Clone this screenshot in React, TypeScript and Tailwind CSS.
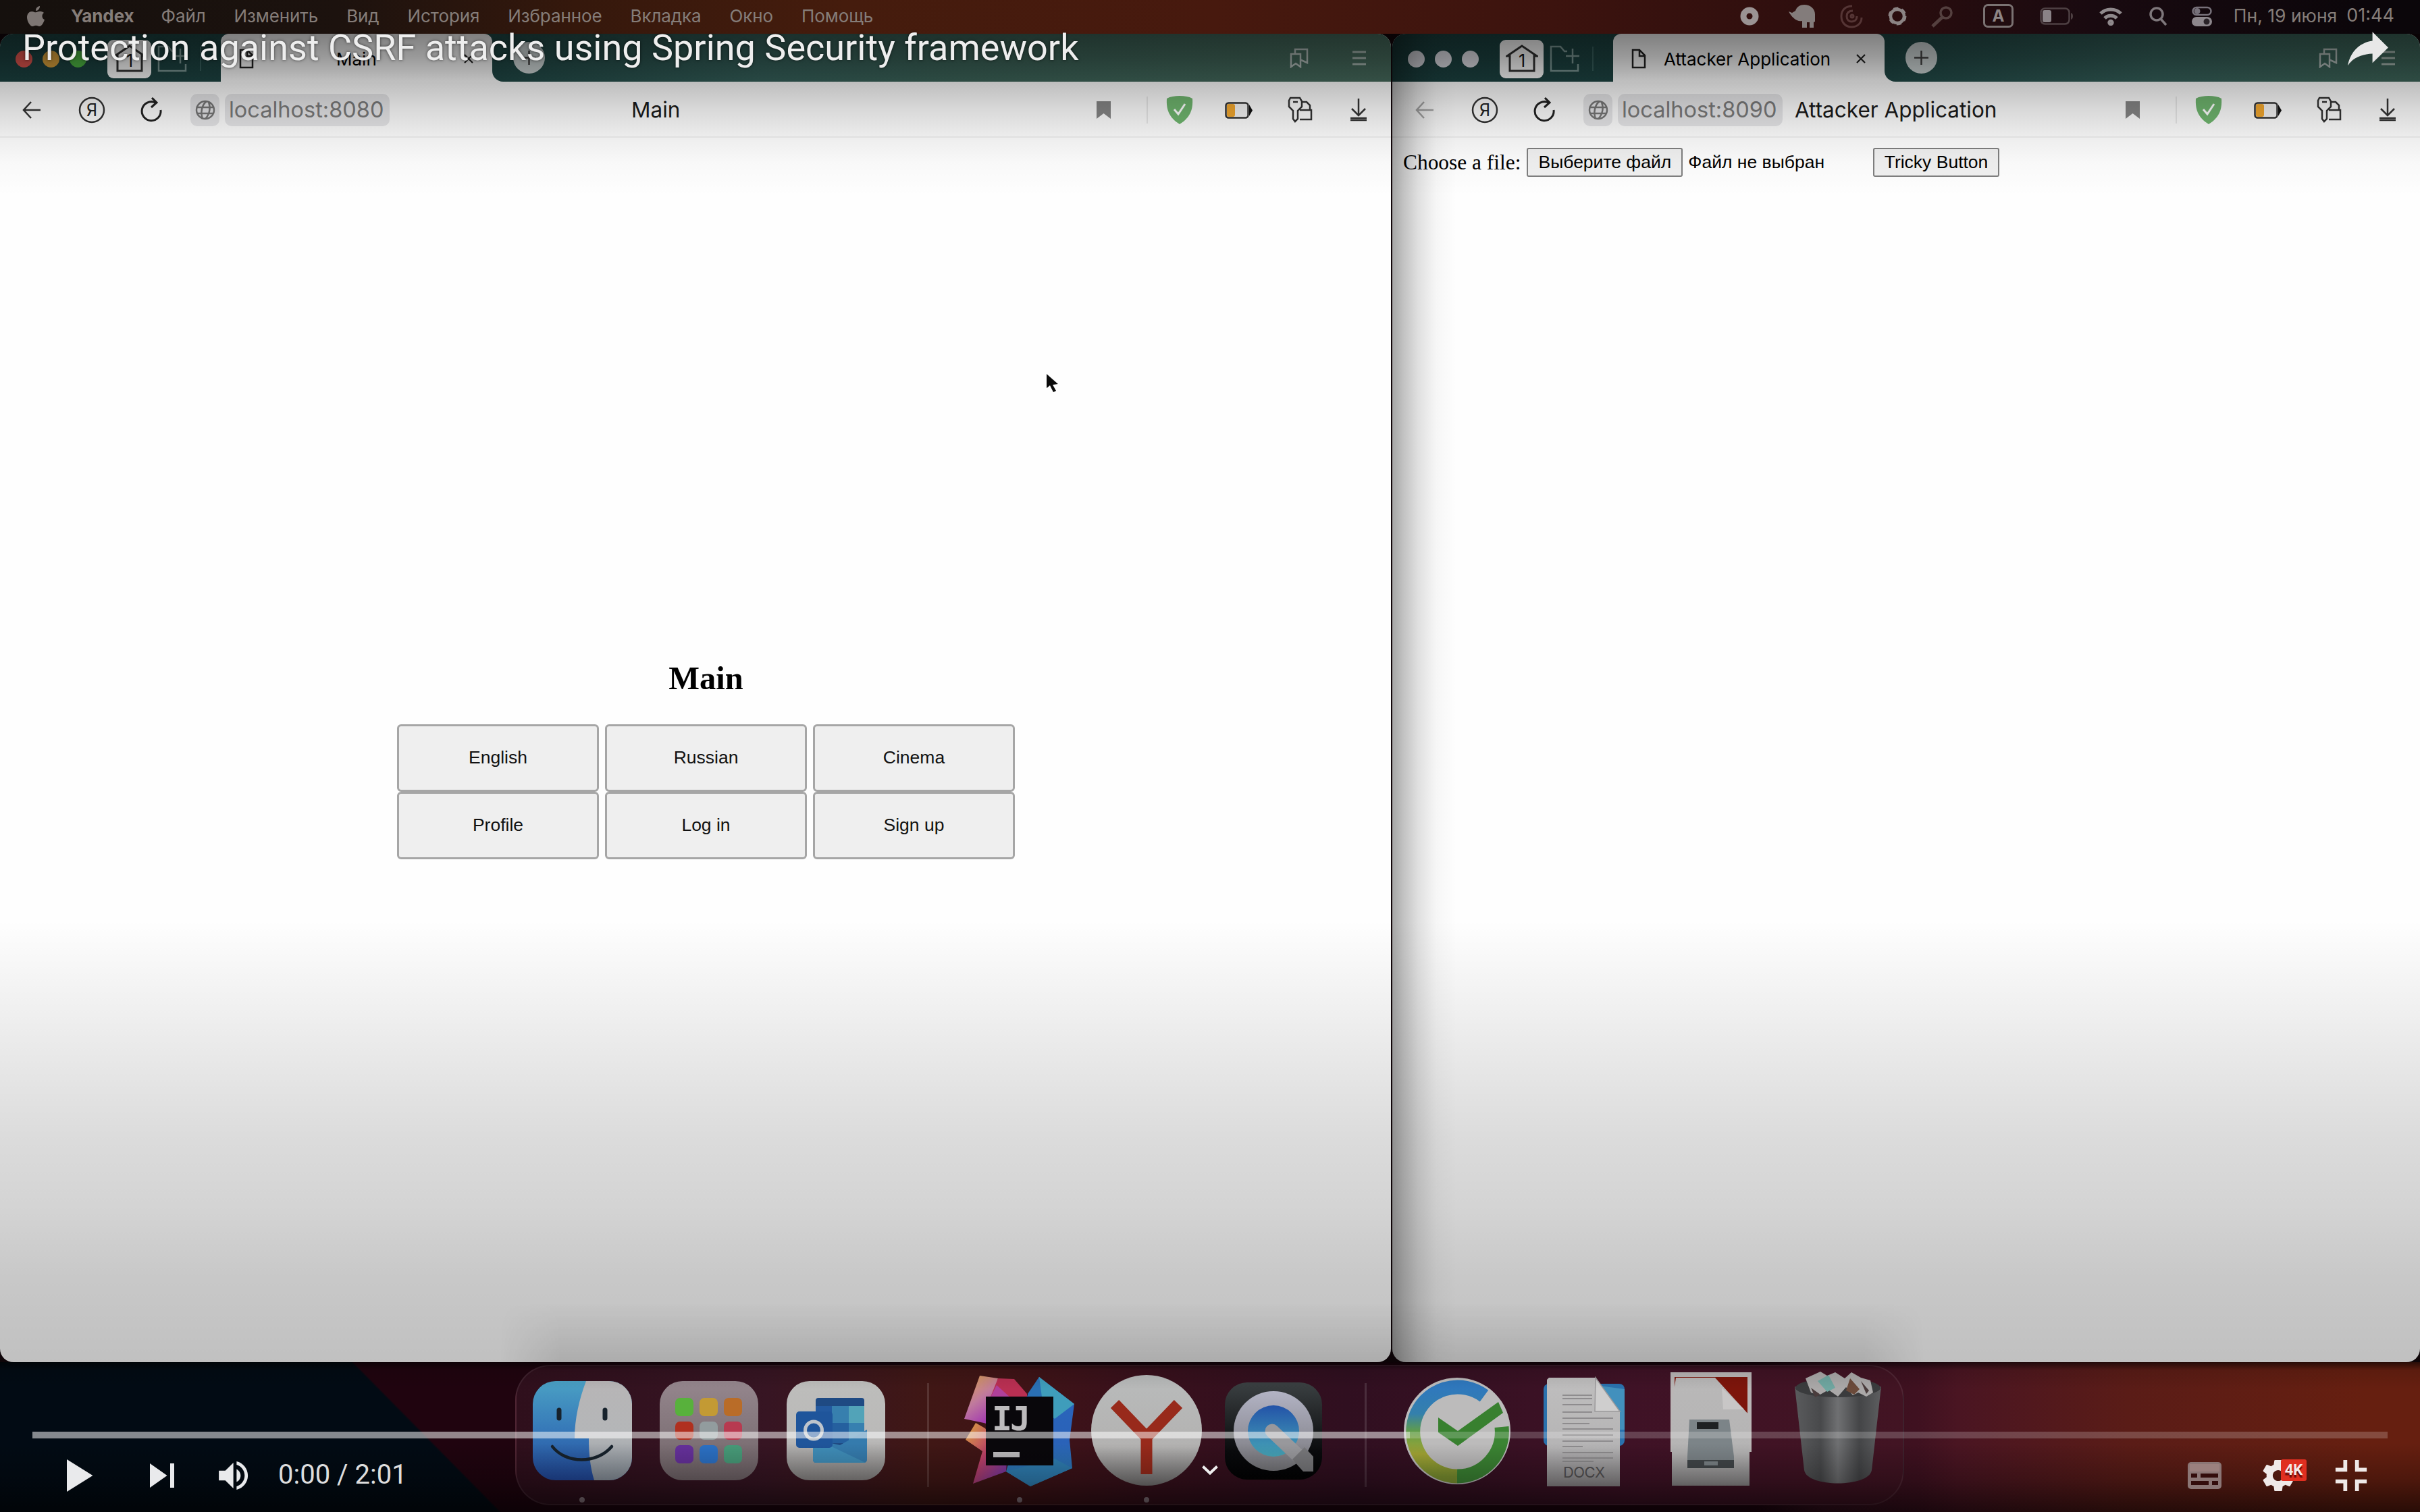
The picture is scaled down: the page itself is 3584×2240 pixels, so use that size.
import React from 'react';

const menuItems = ['Файл', 'Изменить', 'Вид', 'История', 'Избранное', 'Вкладка', 'Окно', 'Помощь'];

function MenuBar() {
  return (
    <header className="flex h-[50px] shrink-0 items-center bg-[linear-gradient(90deg,#15100d_0,#1c120e_500px,#35180c_850px,#451c0d_1250px,#47190e_1800px,#3c130e_2300px,#2a0d0e_2800px,#190a10_3100px,#0b060a_3500px)] pb-[3px] text-[26px] tracking-[-0.1px] text-[#857d79]">
      <svg className="ml-[38px] shrink-0" width="30" height="32" viewBox="0 0 30 32" fill="#7d7673">
        <path d="M21 1c.3 3.600-2.600 7-6 7-.4-3.400 2.600-6.700 6-7zM27 11c-3.600 2.300-3.400 8.300 1 10.200C26.400 26 23.500 31 20.200 31c-1.900 0-2.900-1.200-5-1.200S12 31 10.200 31C6.500 31 2 23.700 2 17.500 2 12 5.500 8.900 9.300 8.900c2.300 0 4 1.400 5.700 1.400 1.600 0 3.600-1.600 6.400-1.500 2.300.1 4.300 1 5.600 2.200z" />
      </svg>
      <span className="mr-[40px] ml-[37px] font-bold">Yandex</span>
      <div className="flex gap-[42px]">
        {menuItems.map((m) => (
          <span key={m}>{m}</span>
        ))}
      </div>
      <div className="mr-[38px] ml-auto flex items-center">
        <svg width="28" height="28" viewBox="0 0 28 28"><circle cx="14" cy="14" r="9" fill="none" stroke="#9a9393" strokeWidth="9" /></svg>
        <svg className="ml-[44px]" width="40" height="36" viewBox="0 0 40 36" fill="#837c7b">
          <path d="M0 11l5 2 5-3c2-6 7-9 13-9 9 0 16 6 16 14v11l-2 1v8h-6v-8h-4v8h-7V25c-8 2-16-6-20-14z" />
        </svg>
        <svg className="ml-[36px]" width="34" height="36" viewBox="0 0 34 36" fill="none" stroke="#553535" strokeWidth="3">
          <path d="M18 3C8 3 2 9 2 18s6 16 15 16 15-6 15-14" /><path d="M19 10c-6 0-9 3-9 8s3 8 7 8 8-2 8-8" /><circle cx="18" cy="18" r="2" />
        </svg>
        <svg className="ml-[37px]" width="28" height="30" viewBox="0 0 28 30" fill="none"><circle cx="14" cy="15" r="10" stroke="#8b8484" strokeWidth="4.500" /><circle cx="14" cy="15" r="11.500" stroke="#8b8484" strokeWidth="4" strokeDasharray="7 5.040" /></svg>
        <svg className="ml-[36px]" width="34" height="34" viewBox="0 0 34 34" fill="none" stroke="#54403f" strokeWidth="3.500">
          <circle cx="22" cy="12" r="8" /><path d="M17 18L2 32" strokeWidth="5" />
        </svg>
        <span className="ml-[43px] flex h-[35px] w-[45px] items-center justify-center rounded-[7px] border-[3px] border-[#7a7272] text-[24px] font-bold text-[#8d8686]">A</span>
        <svg className="ml-[39px]" width="50" height="28" viewBox="0 0 50 28">
          <rect x="1.500" y="2.500" width="42" height="23" rx="6" fill="none" stroke="#4e4043" strokeWidth="2.500" /><rect x="4" y="5" width="13" height="18" rx="3" fill="#8a8286" /><path d="M46 9c4 1 4 9 0 10z" fill="#4e4043" />
        </svg>
        <svg className="ml-[37px]" width="36" height="28" viewBox="0 0 36 28" fill="none" stroke="#8f898c" strokeWidth="5">
          <path d="M3 10c8-8 22-8 30 0" /><path d="M9 17c5-5 13-5 18 0" /><circle cx="18" cy="23.500" r="2.200" />
        </svg>
        <svg className="ml-[38px]" width="28" height="30" viewBox="0 0 28 30" fill="none" stroke="#7e777b" strokeWidth="3.500"><circle cx="12" cy="12" r="9" /><path d="M18 19l8 9" /></svg>
        <svg className="ml-[36px]" width="30" height="30" viewBox="0 0 30 30">
          <rect x="1.500" y="2" width="27" height="11" rx="5.500" fill="none" stroke="#77717a" strokeWidth="2.500" /><circle cx="8" cy="7.500" r="4.500" fill="#77717a" /><rect x="0" y="16" width="30" height="14" rx="7" fill="#8d878c" /><circle cx="22" cy="23" r="4.500" fill="#2a2328" />
        </svg>
        <span className="ml-[32px] text-[26.500px] tracking-normal">Пн, 19 июня</span>
        <span className="ml-[14px] text-[27px] tracking-normal">01:44</span>
      </div>
    </header>
  );
}

function TabStrip({ active, title, titleCls }: { active: boolean; title: string; titleCls: string }) {
  return (
    <div className="flex h-[71px] items-stretch bg-[linear-gradient(90deg,#1b4140_0,#1f4745_700px,#35605a_1100px,#3c6459_1400px,#466a5c_2060px)]">
      <div className="flex w-[327px] items-center pt-[3px]">
        {active ? (
          <div className="ml-[23px] flex gap-[15px]"><i className="size-[25px] rounded-full bg-[#e2564f]" /><i className="size-[25px] rounded-full bg-[#dda33c]" /><i className="size-[25px] rounded-full bg-[#4fb944]" /></div>
        ) : (
          <div className="ml-[23px] flex gap-[15px]"><i className="size-[25px] rounded-full bg-[#e3e3ea]" /><i className="size-[25px] rounded-full bg-[#e3e3ea]" /><i className="size-[25px] rounded-full bg-[#e3e3ea]" /></div>
        )}
        <div className="ml-[31px] flex h-[57px] w-[65px] items-center justify-center rounded-[9px] bg-white">
          <svg width="48" height="42" viewBox="0 0 48 42"><path d="M24 2L2 17h4v22h36V17h4z" fill="none" stroke="#333" strokeWidth="3" /><text x="24" y="33" textAnchor="middle" fontSize="25" fill="#111">1</text></svg>
        </div>
        <svg className="ml-[9px]" width="44" height="40" viewBox="0 0 44 40" fill="none" stroke="#7f9b98" strokeWidth="2.500"><path d="M42 28v10H2V2h14l6 7h4M24 16h20M34 5v22" /></svg>
        <i className="ml-[19px] h-[36px] w-[2px] bg-[#38605e]" />
      </div>
      <div className="flex w-[402px] items-center rounded-t-[12px] bg-white pt-[3px]">
        <svg className="ml-[27px]" width="22" height="30" viewBox="0 0 22 30" fill="none" stroke="#222" strokeWidth="2.500"><path d="M2 2h10l8 8v18H2zM12 2v9h8" /></svg>
        <span className={titleCls}>{title}</span>
        <svg className="mr-[28px] ml-auto" width="14" height="14" viewBox="0 0 14 14" stroke="#222" strokeWidth="2.200"><path d="M1 1l12 12M13 1L1 13" /></svg>
      </div>
      <div className="flex flex-1 items-stretch bg-white">
        <div className="flex flex-1 items-center rounded-bl-[16px] bg-[linear-gradient(90deg,#1f4745_0,#35605a_400px,#3c6459_700px,#466a5c_1330px)]">
          <svg className="ml-[31px]" width="47" height="47" viewBox="0 0 47 47"><circle cx="23.500" cy="23.500" r="23.500" fill="#d3dbdb" /><path d="M23.500 13v21M13 23.500h21" stroke="#444" strokeWidth="2.500" /></svg>
          <svg className="ml-auto" width="28" height="30" viewBox="0 0 28 30" fill="none" stroke="#b5c0bd" strokeWidth="2.500"><path d="M2 9h14v19l-7-5-7 5zM8 8V2h18v20l-9-4" /></svg>
          <svg className="mr-[37px] ml-[65px]" width="20" height="22" viewBox="0 0 20 22" stroke="#a9b8b2" strokeWidth="3"><path d="M0 2h20M0 11h20M0 20h20" /></svg>
        </div>
      </div>
    </div>
  );
}

function Toolbar({ host, title, titleCls, backCls }: { host: string; title: string; titleCls: string; backCls: string }) {
  return (
    <div className="flex h-[83px] items-center border-b-2 border-[#f0f0f0] bg-[#fdfdfd] pt-[3px] text-[31.500px]">
      <svg className={backCls} width="29" height="28" viewBox="0 0 29 28" fill="none" stroke="currentColor" strokeWidth="2.500"><path d="M14 2L3 14l11 12M3 14h25" /></svg>
      <svg className="ml-[55px]" width="40" height="40" viewBox="0 0 40 40"><circle cx="20" cy="20" r="18" fill="none" stroke="#333" strokeWidth="2.500" /><text x="20" y="29" textAnchor="middle" fontSize="25" fill="#222">Я</text></svg>
      <svg className="ml-[51px]" width="34" height="38" viewBox="0 0 34 38" fill="none" stroke="#222" strokeWidth="3"><path d="M31 19a14 14 0 1 1-8-11" /><path d="M18 1l7 7-8 7" /></svg>
      <span className="ml-[41px] flex h-[48px] w-[43px] items-center justify-center rounded-[10px] bg-[#e6e6e8]">
        <svg width="30" height="30" viewBox="0 0 30 30" fill="none" stroke="#777" strokeWidth="2.500"><circle cx="15" cy="15" r="13" /><path d="M3 11h24M3 20h24M17 2c-8 6-9 18-6 26M20 3c3 8 2 18-5 25" /></svg>
      </span>
      <span className="ml-[8px] flex h-[48px] w-[244px] items-center rounded-[10px] bg-[#e6e6e8] pl-[6px] text-[32.500px] text-[#7a7a7a]">{host}</span>
      <span className={titleCls}>{title}</span>
      <svg className="ml-auto" width="21" height="26" viewBox="0 0 21 26" fill="#858585"><path d="M0 0h21v26l-10.500-8L0 26z" /></svg>
      <i className="ml-[53px] h-[40px] w-[2px] bg-[#e8e8e8]" />
      <svg className="ml-[27px]" width="40" height="42" viewBox="0 0 40 42"><path d="M20 0c7 0 14 1 19 4 1 16-3 28-19 38C4 32 0 20 1 4c5-3 12-4 19-4z" fill="#6fb56e" /><path d="M12 20l6 7 10-15" fill="none" stroke="#fff" strokeWidth="3" /></svg>
      <svg className="ml-[47px]" width="42" height="25" viewBox="0 0 42 25"><rect x="1.500" y="1.500" width="33" height="22" rx="4" fill="#f4f4f4" stroke="#333" strokeWidth="2.500" /><path d="M36 4l5 8.500-5 8.500z" fill="#111" /><rect x="3" y="3" width="12" height="19" rx="3" fill="#f2a72e" /></svg>
      <svg className="ml-[50px]" width="38" height="40" viewBox="0 0 38 40" fill="none" stroke="#333" strokeWidth="2.500"><path d="M5 2h14l3 5v8l-6 6v12l-4 4-3-4V21l-6-6V6zM9 8h7" /><path d="M22 8h7l5 5v6M19 20h17v14H19" /></svg>
      <svg className="mr-[35px] ml-[55px]" width="26" height="34" viewBox="0 0 26 34" fill="none" stroke="#333" strokeWidth="2.500"><path d="M13 0v25M3 15l10 10 10-10M1 29h24M1 32h24" /></svg>
    </div>
  );
}

const pageButtons = ['English', 'Russian', 'Cinema', 'Profile', 'Log in', 'Sign up'];

function MainWindow() {
  return (
    <section className="flex w-[2060px] flex-col overflow-hidden rounded-[20px] bg-[#fefefe]">
      <TabStrip active title="Main" titleCls="ml-[122px] text-[26px]" />
      <Toolbar host="localhost:8080" title="Main" titleCls="ml-[358px] text-[#1a1a1a]" backCls="ml-[32px] text-[#333]" />
      <main className="ml-[588px] flex w-[915px] flex-1 flex-col items-center pt-[771px] text-black">
        <h1 className="font-['Liberation_Serif'] text-[48.500px] leading-[60px] font-bold">Main</h1>
        <div className="mt-[38px] grid grid-cols-3 gap-x-[9px] font-['Liberation_Sans'] text-[26.500px]">
          {pageButtons.map((b) => (
            <button key={b} className="h-[100px] w-[299px] rounded-[6px] border-3 border-[#a6a6a6] bg-[#efefef] text-[#111]">{b}</button>
          ))}
        </div>
      </main>
    </section>
  );
}

function AttackerWindow() {
  return (
    <section className="relative flex flex-1 flex-col overflow-hidden rounded-[20px] bg-[#fefefe]">
      <TabStrip active={false} title="Attacker Application" titleCls="ml-[26px] text-[26px]" />
      <Toolbar host="localhost:8090" title="Attacker Application" titleCls="ml-[18px] text-[#1a1a1a]" backCls="ml-[33px] text-[#aaa]" />
      <main className="mt-[13px] flex items-center font-['Liberation_Sans'] text-[26.500px] text-black">
        <span className="ml-[16px] font-['Liberation_Serif'] text-[31.400px]">Choose a file:</span>
        <button className="ml-[9px] flex h-[43px] w-[231px] items-center justify-center rounded-[3px] border-2 border-[#808080] bg-[#f1f1f1]">Выберите файл</button>
        <span className="ml-[8px]">Файл не выбран</span>
        <button className="ml-[72px] flex h-[43px] w-[187px] items-center justify-center rounded-[3px] border-2 border-[#808080] bg-[#f1f1f1]">Tricky Button</button>
      </main>
      <div className="absolute inset-y-0 left-0 w-[95px] bg-[linear-gradient(90deg,rgba(0,0,0,.35)_0,rgba(0,0,0,.24)_16px,rgba(0,0,0,.12)_38px,rgba(0,0,0,.03)_65px,transparent_95px)]" />
    </section>
  );
}

function Cell({ children, dot }: { children: React.ReactNode; dot?: boolean }) {
  return (
    <svg width="188" height="208" viewBox="0 0 188 208" className="shrink-0">
      {children}
      {dot && <circle cx="94" cy="200" r="4" fill="#8a7780" />}
    </svg>
  );
}

const launchColors = ['#58b13c', '#c39a34', '#b96c28', '#b0301f', '#929c9e', '#b73a50', '#65309a', '#2b70c4', '#479a78'];

function Dock() {
  return (
    <nav className="mt-[4px] ml-[763px] flex h-[208px] w-[2057px] items-center rounded-[52px] border-2 border-[#ffffff14] bg-[linear-gradient(90deg,#2f0f1c_0,#371523_370px,#401715_610px,#401416_720px,#38101c_940px,#300f20_1230px,#3f1226_1640px,#421423_2057px)] pl-[3px]">
      <Cell dot>
        <defs>
          <clipPath id="fclip"><rect x="21" y="24" width="147" height="147" rx="34" /></clipPath>
          <linearGradient id="fb" x1="0" y1="0" x2="0" y2="1"><stop offset="0" stopColor="#4aa0c4" /><stop offset=".5" stopColor="#3678b8" /><stop offset="1" stopColor="#21479a" /></linearGradient>
          <linearGradient id="fw" x1="0" y1="0" x2="0" y2="1"><stop offset="0" stopColor="#b7b5b6" /><stop offset=".55" stopColor="#b4b6b8" /><stop offset="1" stopColor="#87909a" /></linearGradient>
        </defs>
        <g clipPath="url(#fclip)">
          <rect x="21" y="24" width="147" height="147" fill="url(#fb)" />
          <path d="M100 24C90 50 83 80 83 109h21c0 22 2 42 8 62h60V24z" fill="url(#fw)" />
        </g>
        <g fill="none" stroke="#17222c" strokeWidth="4.500" strokeLinecap="round"><path d="M60 67v12M128 67v12" strokeWidth="7" /><path d="M50 121c20 26 66 26 88 0" /></g>
      </Cell>
      <Cell>
        <linearGradient id="lp" x1="0" y1="0" x2="0" y2="1"><stop offset="0" stopColor="#95868d" /><stop offset="1" stopColor="#706468" /></linearGradient>
        <rect x="21" y="24" width="146" height="147" rx="34" fill="url(#lp)" />
        {launchColors.map((c, i) => (
          <rect key={c} x={44 + (i % 3) * 36} y={49 + Math.floor(i / 3) * 35} width="27" height="27" rx="7" fill={c} />
        ))}
      </Cell>
      <Cell>
        <linearGradient id="ol" x1="0" y1="0" x2="0" y2="1"><stop offset="0" stopColor="#bdbdbb" /><stop offset=".6" stopColor="#bab9b8" /><stop offset="1" stopColor="#878483" /></linearGradient>
        <rect x="21" y="24" width="146" height="147" rx="34" fill="url(#ol)" />
        <rect x="64" y="49" width="72" height="90" rx="4" fill="#1f4a83" />
        <rect x="64" y="61" width="24" height="50" fill="#23599f" /><rect x="88" y="61" width="25" height="25" fill="#377fae" /><rect x="113" y="61" width="23" height="25" fill="#52a3b8" /><rect x="88" y="86" width="25" height="30" fill="#25609f" /><rect x="113" y="86" width="23" height="30" fill="#3780b0" />
        <path d="M100 119l40-23v45c0 2-2 4-4 4H64c-2 0-4-2-4-4V110z" fill="#357bad" /><path d="M60 108l78 37H64c-2 0-4-2-4-4z" fill="#3f8db8" />
        <rect x="35" y="69" width="54" height="54" rx="5" fill="#1f559b" />
        <ellipse cx="61" cy="97" rx="12.500" ry="13" fill="none" stroke="#bfc5cc" strokeWidth="5" />
      </Cell>
      <div className="flex w-[84px] shrink-0 justify-center"><i className="h-[154px] w-[3px] bg-[#ffffff20]" /></div>
      <Cell dot>
        <defs>
          <linearGradient id="ij1" x1="0" y1="0" x2=".5" y2="1"><stop offset="0" stopColor="#dca24a" /><stop offset=".55" stopColor="#c07a9d" /><stop offset="1" stopColor="#a33ab0" /></linearGradient>
          <linearGradient id="ij2" x1="0" y1="0" x2="0" y2="1"><stop offset="0" stopColor="#2a66bd" /><stop offset=".6" stopColor="#2a62b8" /><stop offset="1" stopColor="#2f86b8" /></linearGradient>
          <linearGradient id="ij3" x1="0" y1="0" x2="1" y2="1"><stop offset="0" stopColor="#d9a43e" /><stop offset=".5" stopColor="#bb4068" /><stop offset="1" stopColor="#6a35b0" /></linearGradient>
        </defs>
        <path d="M35 16l27 4-8 40v30l-13-4-29-6z" fill="url(#ij1)" />
        <path d="M62 20l24 1 19 22v12H48z" fill="#b92f52" /><path d="M60 30l22 20H50z" fill="#b0409a" />
        <path d="M123 18l52 40-7 53 4 42-62 27-36-22 30-110z" fill="url(#ij2)" />
        <path d="M123 18l52 40-29 22-36-30z" fill="#3f9dbb" /><path d="M123 18l-17 25 4 12h18z" fill="#2a6fb4" />
        <path d="M74 158l36 22 62-27-26-14z" fill="#2f7fb4" />
        <path d="M29 86l14 8 32 50-1 14-49 18 14-48-25-17z" fill="url(#ij3)" />
        <rect x="44" y="47" width="100" height="102" fill="#09070b" />
        <text x="53" y="97" fontFamily="DejaVu Sans Mono" fontWeight="bold" fontSize="50" letterSpacing="-3" fill="#bdbbbd">IJ</text>
        <rect x="55" y="129" width="39" height="8" fill="#bdbbbd" />
      </Cell>
      <Cell dot>
        <linearGradient id="yb" x1="0" y1="0" x2="0" y2="1"><stop offset="0" stopColor="#b9bbbb" /><stop offset=".65" stopColor="#b3b2b1" /><stop offset="1" stopColor="#767474" /></linearGradient>
        <circle cx="94" cy="97" r="82" fill="url(#yb)" />
        <path d="M47 58l47 49 47-49M94 105v57" fill="none" stroke="#982a1b" strokeWidth="17" />
      </Cell>
      <Cell>
        <linearGradient id="qb" x1="0" y1="0" x2="0" y2="1"><stop offset="0" stopColor="#3b4042" /><stop offset=".7" stopColor="#0a0b0d" /><stop offset="1" stopColor="#020203" /></linearGradient>
        <linearGradient id="qr" x1="0" y1="0" x2="0" y2="1"><stop offset="0" stopColor="#b2b3c4" /><stop offset="1" stopColor="#77777b" /></linearGradient>
        <linearGradient id="qi" x1="0" y1="0" x2="0" y2="1"><stop offset="0" stopColor="#2353a8" /><stop offset="1" stopColor="#47a6b8" /></linearGradient>
        <rect x="22" y="26" width="144" height="144" rx="33" fill="url(#qb)" />
        <circle cx="94" cy="98" r="59" fill="url(#qr)" /><circle cx="94" cy="98" r="38" fill="url(#qi)" />
        <path d="M92 98l38 36" stroke="#98989c" strokeWidth="21" strokeLinecap="round" /><path d="M122 140l18-18 13 14v22h-15z" fill="#78787b" />
      </Cell>
      <div className="flex w-[84px] shrink-0 justify-center"><i className="h-[154px] w-[3px] bg-[#ffffff20]" /></div>
      <Cell>
        <linearGradient id="sb" x1="0" y1="0" x2="0" y2="1"><stop offset="0" stopColor="#2f78bd" /><stop offset=".3" stopColor="#3480ac" /><stop offset=".5" stopColor="#619d48" /><stop offset=".75" stopColor="#a3a534" /><stop offset="1" stopColor="#7c9230" /></linearGradient>
        <circle cx="94" cy="98" r="79" fill="#bcbbbb" />
        <path d="M134 46A66 66 0 1 0 94 165" fill="none" stroke="url(#sb)" strokeWidth="21" />
        <path d="M94 165A66 66 0 0 0 160 92" fill="none" stroke="#3b8433" strokeWidth="21" />
        <path d="M66 78l29 20 60-43 7 16-67 49-29-20z" fill="#38802f" />
      </Cell>
      <Cell>
        <rect x="34" y="28" width="120" height="92" rx="8" fill="#2a71ad" /><path d="M110 30l44 6v60h-30z" fill="#4290bd" />
        <linearGradient id="dx" x1="0" y1="0" x2="0" y2="1"><stop offset="0" stopColor="#bfbebe" /><stop offset=".65" stopColor="#b5b4b5" /><stop offset="1" stopColor="#8b888a" /></linearGradient>
        <path d="M42 19h69l36 50v111H39V22z" fill="url(#dx)" /><path d="M111 19l36 50h-37z" fill="#cfcece" stroke="#9b999b" strokeWidth="1.500" />
        <path d="M62 45h44M62 50h44M62 59h44M62 70h44M62 79h75M62 87h40M62 95h75M62 104h75M62 113h75M62 121h30M62 130h75M62 138h75M62 143h46" stroke="#8e8c8e" strokeWidth="2.200" />
        <text x="94" y="167" textAnchor="middle" fontSize="22" fontFamily="Inter" textLength="62" fill="#555355">DOCX</text>
      </Cell>
      <Cell>
        <rect x="34" y="11" width="120" height="118" fill="#bab6b6" /><rect x="40" y="18" width="108" height="60" fill="#7d150b" />
        <linearGradient id="dk" x1="0" y1="0" x2="0" y2="1"><stop offset="0" stopColor="#b9b8b8" /><stop offset=".7" stopColor="#b5b4b4" /><stop offset="1" stopColor="#8d8b8c" /></linearGradient>
        <path d="M42 19h58l51 56v104H36V60z" fill="url(#dk)" /><path d="M110 34l33 32h-31z" fill="#c8c6c6" />
        <path d="M62 81h59l7 55v17H59v-17z" fill="#7c8488" /><rect x="73" y="85" width="32" height="10" fill="#1e2123" /><path d="M59 141h69v12H59z" fill="#42474a" /><path d="M84 143h20v6H84z" fill="#7c8488" />
      </Cell>
      <Cell>
        <linearGradient id="tr" x1="0" y1="0" x2="1" y2="0"><stop offset="0" stopColor="#5a5b5d" /><stop offset=".3" stopColor="#48494b" /><stop offset=".5" stopColor="#6f7072" /><stop offset=".75" stopColor="#444547" /><stop offset="1" stopColor="#5d5e60" /></linearGradient>
        <path d="M30 32c30 14 98 14 128 0l-14 124c-4 26-96 26-100 0z" fill="url(#tr)" />
        <ellipse cx="94" cy="34" rx="63" ry="14" fill="#3a3b3d" />
        <path d="M46 20l22-10 10 6 12-5 14 9 10-9 14 8 14 4 4 18-10 6-12-6-8 4-10-12-12 14-14-10-14 8-12-4z" fill="#aaa8a8" />
        <path d="M64 24l16-9 10 19-12 6z" fill="#6fa6a0" /><path d="M112 20l14 16-8 8-12-6z" fill="#6b4a3a" /><path d="M54 34l14 10-8 4zM128 24l12 14-4 5z" fill="#4a3c3c" />
      </Cell>
    </nav>
  );
}

function PlayerOverlay() {
  return (
    <div className="absolute inset-0 flex flex-col justify-between font-['Roboto'] text-[#eee]">
      <div className="flex items-start">
        <h2 className="mt-[39px] ml-[33px] text-[54px] leading-[64px] whitespace-nowrap [text-shadow:0_0_4px_rgba(0,0,0,.6)]">Protection against CSRF attacks using Spring Security framework</h2>
        <svg className="mt-[18px] mr-[23px] ml-auto" width="108" height="108" viewBox="0 0 36 36" fill="#e8e8e8">
          <path d="m 20.20,14.19 0,-4.45 7.79,7.79 -7.79,7.56 0,-4.56 C 16.27,20.69 12.10,21.81 9.34,24.76 8.80,25.13 7.60,27.29 8.12,25.65 9.08,21.32 11.80,17.18 15.98,15.38 c 1.33,-0.60 2.76,-0.98 4.21,-1.19 z" />
        </svg>
      </div>
      <div className="relative">
        <div className="mx-[48px] h-[10px] bg-white/20"><div className="h-full w-[2040px] bg-white/40" /></div>
        <div className="flex h-[109px] items-center">
          <svg className="ml-[63px]" width="108" height="108" viewBox="0 0 36 36" fill="#e9eaec"><path d="M12 26L24.800 18 12 10z" /></svg>
          <svg className="ml-[15px]" width="108" height="108" viewBox="0 0 36 36" fill="#e9eaec"><path d="M 12,24 20.500,18 12,12 V 24 z M 22,12 v 12 h 2 V 12 h -2 z" /></svg>
          <svg className="ml-[11px]" width="86" height="86" viewBox="0 0 36 36" fill="#e9eaec"><path d="M8,21 L12,21 L17,26 L17,10 L12,15 L8,15 L8,21 Z M19,14 L19,22 C20.480,21.320 21.500,19.770 21.500,18 C21.500,16.260 20.480,14.740 19,14 Z M19,11.290 C21.890,12.150 24,14.830 24,18 C24,21.170 21.890,23.850 19,24.710 L19,26.770 C23.010,25.860 26,22.280 26,18 C26,13.720 23.010,10.140 19,9.230 L19,11.290 Z" /></svg>
          <span className="mb-[2px] ml-[21px] text-[40px] text-[#ddd]">0:00 / 2:01</span>
          <div className="mr-[50px] ml-auto flex items-center">
            <svg className="mr-[32px]" width="50" height="40" viewBox="0 0 50 40"><rect width="50" height="40" rx="5" fill="#8b7675" /><rect x="3" y="3" width="44" height="11" fill="#9b807e" /><path d="M5 17h9v6H5zM19 17h26v6H19zM5 28h26v6H5zM36 28h9v6h-9z" fill="#330d0c" /></svg>
            <div className="relative mr-[4px]">
              <svg width="104" height="104" viewBox="0 0 36 36" fill="#efe9e8"><path d="m 23.940,18.780 c .03,-0.250 .05,-0.510 .05,-0.780 0,-0.270 -0.020,-0.520 -0.050,-0.780 l 1.680,-1.320 c .15,-0.120 .19,-0.330 .09,-0.510 l -1.600,-2.760 c -0.090,-0.170 -0.310,-0.240 -0.480,-0.170 l -1.990,.8 c -0.410,-0.320 -0.860,-0.580 -1.350,-0.780 l -0.300,-2.120 c -0.020,-0.190 -0.190,-0.330 -0.390,-0.330 l -3.200,0 c -0.200,0 -0.360,.14 -0.390,.33 l -0.300,2.120 c -0.480,.2 -0.930,.47 -1.350,.78 l -1.990,-0.800 c -0.180,-0.070 -0.390,0 -0.480,.17 l -1.600,2.760 c -0.100,.17 -0.050,.39 .09,.51 l 1.680,1.320 c -0.030,.25 -0.050,.52 -0.050,.78 0,.26 .02,.52 .05,.78 l -1.680,1.320 c -0.150,.12 -0.190,.33 -0.090,.51 l 1.600,2.760 c .09,.17 .31,.24 .48,.17 l 1.990,-0.800 c .41,.32 .86,.58 1.350,.78 l .30,2.120 c .02,.19 .19,.33 .39,.33 l 3.200,0 c .2,0 .36,-0.140 .39,-0.330 l .30,-2.120 c .48,-0.200 .93,-0.470 1.350,-0.780 l 1.990,.8 c .18,.07 .39,0 .48,-0.170 l 1.600,-2.760 c .09,-0.170 .05,-0.390 -0.090,-0.510 l -1.680,-1.320 0,0 z m -5.940,2.010 c -1.540,0 -2.800,-1.250 -2.800,-2.800 0,-1.540 1.250,-2.800 2.800,-2.800 1.540,0 2.800,1.250 2.800,2.800 0,1.540 -1.250,2.800 -2.800,2.800 l 0,0 z" /></svg>
              <span className="absolute top-[28px] left-[56px] flex h-[32px] w-[38px] items-center justify-center rounded-[3px] bg-[#e02f20] text-[22px] leading-none font-bold text-[#f4e9e8] [text-shadow:0_4px_1px_rgba(60,0,0,.7)]">4K</span>
            </div>
            <svg width="104" height="104" viewBox="0 0 36 36" fill="#efe9e8"><path d="M14 14h-4v2h6v-6h-2zM22 14v-4h-2v6h6v-2zM20 26h2v-4h4v-2h-6zM10 22h4v4h2v-6h-6z" /></svg>
          </div>
        </div>
        <svg className="absolute top-[50px] left-[1780px]" width="24" height="14" viewBox="0 0 24 14" fill="none" stroke="#eee" strokeWidth="4"><path d="M1.500 1.500L12 11.500 22.500 1.500" /></svg>
      </div>
    </div>
  );
}

export default function App() {
  return (
    <div className="relative flex h-[2240px] w-[3584px] flex-col overflow-hidden bg-[#12060a] font-['Inter',sans-serif]">
      <MenuBar />
      <div className="flex h-[1968px] shrink-0 gap-[2px]">
        <MainWindow />
        <AttackerWindow />
      </div>
      <footer className="h-[222px] bg-[linear-gradient(90deg,transparent_2600px,#38101f_2700px,#3f1120_2840px,#4a1522_2900px,#5a1c17_3150px,#661f10_3500px),linear-gradient(45.400deg,#020b14_0,#020b14_526px,#20040f_529px,#20040f_700px)]">
        <Dock />
      </footer>
      <div className="absolute inset-x-0 top-[50px] h-[240px] bg-[linear-gradient(180deg,rgba(0,0,0,.5)_0,rgba(0,0,0,.39)_37px,rgba(0,0,0,.25)_71px,rgba(0,0,0,.15)_110px,rgba(0,0,0,.07)_150px,rgba(0,0,0,.025)_190px,transparent_240px)]" />
      <div className="absolute inset-x-0 top-[1363px] h-[655px] bg-[linear-gradient(180deg,transparent_0,rgba(0,0,0,.07)_166px,rgba(0,0,0,.137)_325px,rgba(0,0,0,.17)_430px,rgba(0,0,0,.21)_527px,rgba(0,0,0,.245)_655px)]" />
      <div className="absolute top-[1930px] left-[740px] h-[88px] w-[2110px] bg-[linear-gradient(180deg,transparent,rgba(0,0,0,.1))] [mask-image:linear-gradient(90deg,transparent,#000_90px,#000_2020px,transparent)]" />
      <div className="absolute inset-x-0 top-[2018px] h-[222px] bg-[linear-gradient(180deg,rgba(0,0,0,.6)_0,rgba(0,0,0,.1)_12px,transparent_40px,transparent_120px,rgba(0,0,0,.25)_175px,rgba(0,0,0,.6)_222px)]" />
      <svg className="absolute top-[553px] left-[1549px]" width="20" height="32" viewBox="0 0 20 32"><path d="M1 1v21l5-4 5 10 4-2-5-9 8-1z" fill="#0a0a0a" /></svg>
      <PlayerOverlay />
    </div>
  );
}
